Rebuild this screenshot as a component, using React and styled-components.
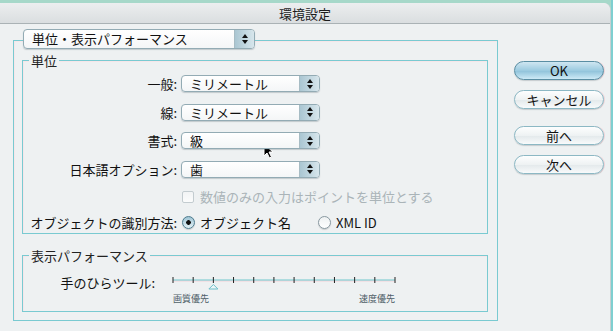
import React from 'react';
import styled, { createGlobalStyle } from 'styled-components';

const Global = createGlobalStyle`
  html, body { margin: 0; padding: 0; }
  body { background: #a6d8c9; font-family: "Noto Sans CJK JP", "Noto Sans", sans-serif; }
`;

const Screen = styled.div`
  position: relative;
  width: 613px;
  height: 331px;
  overflow: hidden;
  box-sizing: border-box;
  padding-top: 3px;
  background: linear-gradient(90deg, #a6d8c9 0, #a6d8c9 611px, #7fcfd0 611px, #7fcfd0 613px);
`;

const Window = styled.div`
  width: 611px;
  height: 328px;
  box-sizing: border-box;
  display: flex;
  flex-direction: column;
  background: #eef1f2;
  border-radius: 0 7px 0 0;
  border-right: 1px solid #c9cfd1;
`;

const TitleBar = styled.div`
  height: 20px;
  display: flex;
  align-items: center;
  justify-content: center;
  background: linear-gradient(#eceeef, #dadee0);
  border-bottom: 1px solid #aab2b5;
  border-radius: 0 7px 0 0;
  font-size: 13px;
  color: #1c1c1c;
`;

const Body = styled.div`
  flex: 1;
  display: flex;
  gap: 16px;
  padding: 16px 0 0 13px;
`;

const Pane = styled.div`
  width: 485px;
  box-sizing: border-box;
  align-self: flex-start;
  display: flex;
  flex-direction: column;
  padding: 0 9px 8px 8px;
  border: 1px solid #79cad1;
  box-shadow: inset 1px 1px 0 #f7e6e9;
`;

const Select = styled.div`
  position: relative;
  z-index: 1;
  width: ${p => p.$w}px;
  height: ${p => p.$h}px;
  box-sizing: border-box;
  display: flex;
  border: 1px solid #93abb4;
  border-radius: 4px;
  background: linear-gradient(#ffffff, #f4f6f7);
  box-shadow: 0 1px 1px rgba(60, 80, 90, 0.25);
  overflow: hidden;
  margin: ${p => p.$margin || '0'};
`;

const SelectText = styled.span`
  flex: 1;
  padding-left: 8px;
  font-size: 13px;
  line-height: ${p => p.$h - 2}px;
  color: #111;
  white-space: nowrap;
`;

const SelectArrows = styled.span`
  width: 19px;
  display: flex;
  align-items: center;
  justify-content: center;
  background: linear-gradient(90deg, #aac6d2, #d7e6ec);
  border-left: 1px solid #a7bcc4;
`;

const Group = styled.div`
  display: flex;
  flex-direction: column;
  border: 1px solid #79cad1;
  box-shadow: inset 1px 1px 0 #f7e6e9;
  margin-top: ${p => p.$top}px;
  padding-bottom: ${p => p.$bottom}px;
`;

const Legend = styled.span`
  align-self: flex-start;
  margin: -8px 0 0 6px;
  padding: 0 2px;
  background: #eef1f2;
  font-size: 13px;
  line-height: 15px;
  color: #222;
`;

const Rows = styled.div`
  display: flex;
  flex-direction: column;
  gap: 11.5px;
  margin-top: 7px;
`;

const Row = styled.div`
  display: grid;
  grid-template-columns: 154px 1fr;
  column-gap: 4px;
  align-items: center;
  height: ${p => p.$h}px;
`;

const Label = styled.span`
  text-align: right;
  font-size: 13px;
  line-height: 17px;
  color: #111;
  white-space: nowrap;
`;

const Inline = styled.div`
  display: flex;
  align-items: center;
`;

const Check = styled.span`
  width: 12px;
  height: 12px;
  box-sizing: border-box;
  border: 1px solid #c3ccd0;
  border-radius: 2px;
  background: linear-gradient(#f2f4f5, #fbfcfc);
  margin: 0 6px 0 1px;
`;

const Dim = styled.span`
  font-size: 13px;
  line-height: 15px;
  color: #aab4b8;
  white-space: nowrap;
`;

const Radio = styled.span`
  width: 13px;
  height: 13px;
  box-sizing: border-box;
  border-radius: 50%;
  flex: none;
  border: 1px solid ${p => (p.$on ? '#4d7b8e' : '#8898a0')};
  background: ${p =>
    p.$on
      ? 'radial-gradient(circle, #111 0 2px, transparent 2.6px), linear-gradient(#9ec4d4, #e2f0f5)'
      : 'linear-gradient(#eef1f2, #ffffff)'};
  box-shadow: 0 1px 1px rgba(0, 0, 0, 0.15);
  margin: 0 5px 0 1px;
`;

const RadioText = styled.span`
  font-size: 13px;
  line-height: 15px;
  color: #111;
  white-space: nowrap;
  margin-right: ${p => p.$gap || 0}px;
`;

const SliderRow = styled.div`
  display: flex;
  align-items: flex-start;
  gap: 16px;
  margin-top: 11px;
`;

const SliderLabel = styled.span`
  width: 132px;
  text-align: right;
  font-size: 13px;
  line-height: 17px;
  color: #111;
`;

const SliderBox = styled.div`
  display: flex;
  flex-direction: column;
`;

const Captions = styled.div`
  width: 222px;
  margin: 3px 0 0 2px;
  display: flex;
  justify-content: space-between;
  font-size: 9px;
  line-height: 12px;
  color: #4f6068;
`;

const Buttons = styled.div`
  display: flex;
  flex-direction: column;
  gap: 10px;
  padding-top: 21px;
`;

const Button = styled.div`
  width: 90px;
  height: 19px;
  box-sizing: border-box;
  border-radius: 10px;
  display: flex;
  align-items: center;
  justify-content: center;
  font-size: 13px;
  color: #111;
  margin-top: ${p => p.$gapTop || 0}px;
  border: 1px solid ${p => (p.$default ? '#5a8ea3' : '#8cb8c4')};
  background: ${p =>
    p.$default
      ? 'linear-gradient(#cfe6f1, #9ccbe0 50%, #8fc2da 52%, #cdeaf6)'
      : 'linear-gradient(#fdfefe, #eef2f3 50%, #e3e9eb 52%, #f8fafb)'};
  box-shadow: 0 1px 1px rgba(40, 60, 70, 0.2), 1px 0 0 #f3d3d8;
`;

const Cursor = styled.svg`
  position: absolute;
  left: 263px;
  top: 143px;
`;

const Arrows = () => (
  <svg width="6" height="10" viewBox="0 0 6 10">
    <path d="M0 4 L3 0 L6 4 Z M0 6 L3 10 L6 6 Z" fill="#111" />
  </svg>
);

const Popup = ({ w, h, text, margin }) => (
  <Select $w={w} $h={h} $margin={margin}>
    <SelectText $h={h}>{text}</SelectText>
    <SelectArrows>
      <Arrows />
    </SelectArrows>
  </Select>
);

const Slider = () => {
  const ticks = Array.from({ length: 12 }, (_, i) => 2 + i * (222 / 11));
  return (
    <svg width="226" height="16" viewBox="0 0 226 16">
      <line x1="2" y1="7" x2="224" y2="7" stroke="#f4d2d8" strokeWidth="1" />
      <line x1="2" y1="6" x2="224" y2="6" stroke="#6fc6cd" strokeWidth="1" />
      {ticks.map((x, i) => (
        <line key={i} x1={x} y1="3" x2={x} y2="9" stroke="#222" strokeWidth="1" />
      ))}
      <path d={`M${ticks[2]} 10.5 L${ticks[2] + 4.5} 15 L${ticks[2] - 4.5} 15 Z`} fill="#eef6f8" stroke="#6cbfca" strokeWidth="1" />
    </svg>
  );
};

export default function App() {
  return (
    <>
      <Global />
      <Screen>
        <Window>
          <TitleBar>環境設定</TitleBar>
          <Body>
            <Pane>
              <Popup w={232} h={20} text="単位・表示パフォーマンス" margin="-12px 0 0 1px" />
              <Group $top={11} $bottom={4}>
                <Legend>単位</Legend>
                <Rows>
                  <Row $h={17}>
                    <Label>一般:</Label>
                    <Popup w={139} h={17} text="ミリメートル" />
                  </Row>
                  <Row $h={17}>
                    <Label>線:</Label>
                    <Popup w={139} h={17} text="ミリメートル" />
                  </Row>
                  <Row $h={17}>
                    <Label>書式:</Label>
                    <Popup w={139} h={17} text="級" />
                  </Row>
                  <Row $h={17}>
                    <Label>日本語オプション:</Label>
                    <Popup w={139} h={17} text="歯" />
                  </Row>
                  <Row $h={13}>
                    <span />
                    <Inline>
                      <Check />
                      <Dim>数値のみの入力はポイントを単位とする</Dim>
                    </Inline>
                  </Row>
                  <Row $h={15}>
                    <Label>オブジェクトの識別方法:</Label>
                    <Inline>
                      <Radio $on />
                      <RadioText $gap={26}>オブジェクト名</RadioText>
                      <Radio />
                      <RadioText>XML ID</RadioText>
                    </Inline>
                  </Row>
                </Rows>
              </Group>
              <Group $top={21} $bottom={6}>
                <Legend>表示パフォーマンス</Legend>
                <SliderRow>
                  <SliderLabel>手のひらツール:</SliderLabel>
                  <SliderBox>
                    <Slider />
                    <Captions>
                      <span>画質優先</span>
                      <span>速度優先</span>
                    </Captions>
                  </SliderBox>
                </SliderRow>
              </Group>
            </Pane>
            <Buttons>
              <Button $default>OK</Button>
              <Button>キャンセル</Button>
              <Button $gapTop={7}>前へ</Button>
              <Button>次へ</Button>
            </Buttons>
          </Body>
        </Window>
        <Cursor width="11" height="16" viewBox="0 0 11 16">
          <path d="M1 1 L1 13 L4 10 L6.5 15 L8.5 14 L6 9 L10 9 Z" fill="#000" stroke="#fff" strokeWidth="1" strokeLinejoin="round" />
        </Cursor>
      </Screen>
    </>
  );
}
